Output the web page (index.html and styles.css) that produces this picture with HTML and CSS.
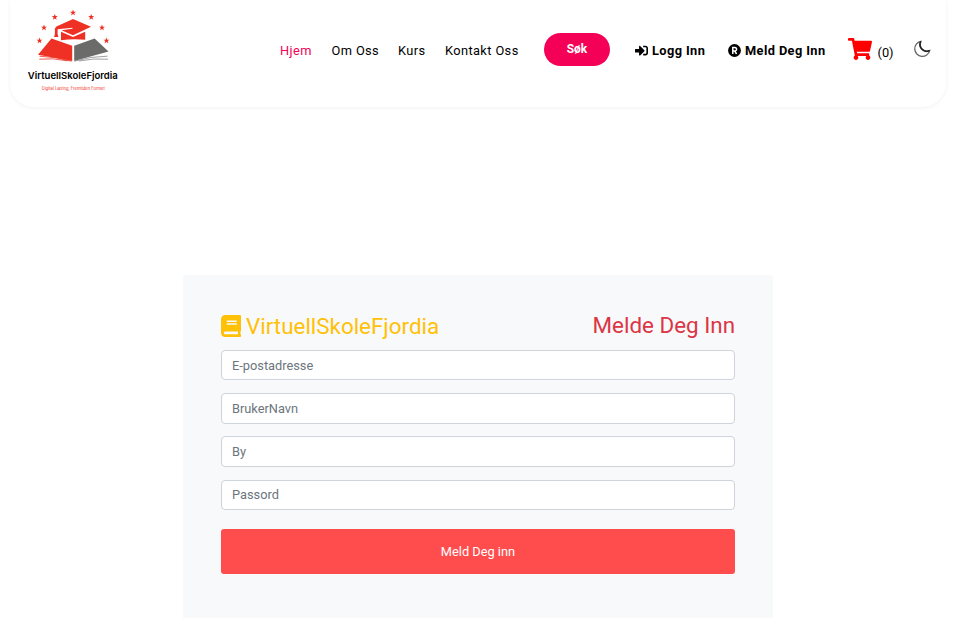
FILE: index.html
```html
<!DOCTYPE html>
<html lang="no">
<head>
<meta charset="utf-8">
<title>VirtuellSkoleFjordia</title>
<link rel="stylesheet" href="styles.css">
</head>
<body>
<header class="navbar">
  <a class="logo" aria-label="VirtuellSkoleFjordia">
    <svg width="110" height="96" viewBox="20 0 110 96">
      <defs><path id="star" d="M0-3.1L.8-.9 3-.9 1.2.5 1.9 2.7 0 1.4-1.9 2.7-1.2.5-3-.9-.8-.9z"/></defs>
      <g fill="#ee3124">
        <use href="#star" x="73" y="12.7"/><use href="#star" x="54.8" y="17"/><use href="#star" x="91.2" y="17"/>
        <use href="#star" x="44" y="27.6"/><use href="#star" x="102" y="27.6"/>
        <use href="#star" x="39.5" y="40.6"/><use href="#star" x="106.5" y="40.6"/>
        <path d="M73 19L91 26.8 73 35.3 61.5 30.2 72.5 28.7v-.9L57.6 29.3v4.6l.8 3h-4.3l.8-3v-5.3l1.5-2z"/>
        <path d="M61 31.7l12 5.4 12.2-5.4v8.1Q73 38.5 61 40.3z"/>
        <path d="M51.5 38.4L72.2 45.8V61L38 54.8z"/>
      </g>
      <path fill="#6b6b69" d="M74.2 45.8l20.4-7.2L108.500 51.600 74.200 61z"/>
      <g fill="none" stroke="#ee3124" stroke-width=".8"><path d="M39.500 56.200q16 .5 32 5M39.300 59.200q14-1.500 28 1.600"/></g>
      <g fill="none" stroke="#888" stroke-width=".8"><path d="M74.500 61.200q16-5 33-5M79 61q14-3 29-1.800"/></g>
      <text class="logo-name" x="27.8" y="79.3" textLength="90" lengthAdjust="spacingAndGlyphs">VirtuellSkoleFjordia</text>
      <text class="logo-tag" x="41.8" y="89.6" textLength="63" lengthAdjust="spacingAndGlyphs">Digital Læring, Fremtiden Formet</text>
    </svg>
  </a>
  <nav class="menu">
    <a class="active">Hjem</a><a>Om Oss</a><a>Kurs</a><a>Kontakt Oss</a>
    <button class="search">Søk</button>
    <a class="auth"><svg width="13" height="13" viewBox="0 0 512 512"><path d="M416 448h-84c-6.600 0-12-5.400-12-12v-40c0-6.600 5.400-12 12-12h84c17.700 0 32-14.300 32-32V160c0-17.700-14.300-32-32-32h-84c-6.600 0-12-5.400-12-12V76c0-6.600 5.400-12 12-12h84c53 0 96 43 96 96v192c0 53-43 96-96 96zm-47-201L201 79c-15-15-41-4.500-41 17v96H24c-13.300 0-24 10.700-24 24v96c0 13.300 10.700 24 24 24h136v96c0 21.500 26 32 41 17l168-168c9.300-9.400 9.300-24.600 0-34z"/></svg><span>Logg Inn</span></a>
    <a class="auth"><svg width="13" height="13" viewBox="0 0 13 13"><circle cx="6.500" cy="6.500" r="6.400"/><path fill="none" stroke="#fff" stroke-width="1.500" d="M4.800 10V3.600h2a1.700 1.700 0 0 1 0 3.500h-2M6.800 7.100L8.600 10"/></svg><span>Meld Deg Inn</span></a>
    <a class="cart"><svg width="24" height="22" viewBox="0 0 576 512" preserveAspectRatio="none"><path d="M528.120 301.319l47.273-208C578.806 78.301 567.391 64 551.990 64H159.208l-9.166-44.810C147.758 8.021 137.930 0 126.529 0H24C10.745 0 0 10.745 0 24v16c0 13.255 10.745 24 24 24h69.883l70.248 343.435C147.325 417.100 136 435.222 136 456c0 30.928 25.072 56 56 56s56-25.072 56-56c0-15.674-6.447-29.835-16.824-40h209.647C430.447 426.165 424 440.326 424 456c0 30.928 25.072 56 56 56s56-25.072 56-56c0-22.172-12.888-41.332-31.579-50.405l5.517-24.276c3.413-15.018-8.002-29.319-23.403-29.319H218.117l-6.545-32h293.145c11.206 0 20.920-7.754 23.403-18.681z"/></svg><span>(0)</span></a>
    <a class="moon" aria-label="Mørk modus"><svg width="18" height="18" viewBox="0 0 18 18"><path d="M7.800 1.300A7.600 7.600 0 1 0 16.700 10.600C11.500 13 4.800 8.200 7.800 1.300z"/><path class="shade" d="M7.800 1.300C4.800 8.200 11.500 13 16.700 10.600"/></svg></a>
  </nav>
</header>
<main class="card">
  <div class="heading">
    <h1 class="brand"><svg width="20" height="22" viewBox="0 0 448 512" preserveAspectRatio="none"><path d="M448 360V24c0-13.300-10.700-24-24-24H96C43 0 0 43 0 96v320c0 53 43 96 96 96h328c13.300 0 24-10.700 24-24v-16c0-7.500-3.500-14.300-8.900-18.700-4.200-15.400-4.200-59.300 0-74.700 5.400-4.300 8.900-11.100 8.900-18.600zM128 134c0-3.300 2.700-6 6-6h212c3.300 0 6 2.700 6 6v20c0 3.300-2.700 6-6 6H134c-3.300 0-6-2.700-6-6v-20zm0 64c0-3.300 2.700-6 6-6h212c3.300 0 6 2.700 6 6v20c0 3.300-2.700 6-6 6H134c-3.300 0-6-2.700-6-6v-20zm253.400 250H96c-17.700 0-32-14.300-32-32 0-17.600 14.400-32 32-32h285.400c-1.900 17.100-1.900 46.900 0 64z"/></svg><span>VirtuellSkoleFjordia</span></h1>
    <h2 class="title">Melde Deg Inn</h2>
  </div>
  <form class="fields">
    <input type="email" placeholder="E-postadresse">
    <input class="tall" type="text" placeholder="BrukerNavn">
    <input class="tall" type="text" placeholder="By">
    <input class="password" type="password" placeholder="Passord">
    <button class="submit" type="button">Meld Deg inn</button>
  </form>
</main>
</body>
</html>
```
FILE: styles.css
```css
* { box-sizing: border-box; }
body {
  margin: 0;
  height: 618px;
  overflow: hidden;
  background: #fff;
  color: #000;
  font: 12.8px/20px Roboto, sans-serif;
}
.navbar {
  display: flex;
  width: 936px;
  height: 107px;
  margin-left: 10px;
  padding-left: 10px;
  border-radius: 0 0 24px 24px;
  box-shadow: 0 1px 4px rgba(0, 0, 0, .06);
}
.logo { width: 260px; }
.logo svg { display: block; }
.logo-name { font: 600 9.5px Inter, sans-serif; }
.logo-tag { font: 4.2px Inter, sans-serif; fill: #ee3124; }
.menu {
  display: grid;
  grid-template-columns: 51.5px 66.5px 47px 99px 91px 93px 119.5px 65.5px 20px;
  height: 102px;
  align-items: center;
  letter-spacing: .4px;
  white-space: nowrap;
}
.active { color: #f50057; }
.search {
  width: 66px;
  height: 33px;
  margin-top: -4px;
  padding: 0;
  border: 0;
  border-radius: 17px;
  background: #f50057;
  color: #fff;
  font: 700 12px Roboto, sans-serif;
}
.auth {
  display: flex;
  align-items: center;
  gap: 4px;
  font-weight: 700;
}
.auth svg { margin-top: -2px; }
.cart {
  display: flex;
  align-items: center;
  gap: 6px;
  letter-spacing: 0;
}
.cart svg { fill: red; margin-top: -4px; }
.cart span { padding-top: 3px; }
.moon svg {
  display: block;
  margin-top: -4px;
  fill: none;
  stroke: #666;
  stroke-width: 1.3;
}
.moon .shade { stroke: #222; stroke-width: 1.6; }
.card {
  width: 590px;
  height: 360px;
  margin: 168px 0 0 183px;
  padding: 36px 38px;
  border-radius: 4px;
  background: #f8f9fb;
}
.heading {
  display: flex;
  justify-content: space-between;
  height: 39px;
}
.brand, .title {
  margin: 0;
  font-size: 22.4px;
  font-weight: 400;
  line-height: 28px;
}
.brand {
  display: flex;
  align-items: center;
  gap: 5px;
  height: 30px;
  color: #ffc107;
}
.brand svg { fill: #ffc107; }
.title { color: #dc3545; }
.fields { display: flex; flex-direction: column; }
.fields input {
  width: 100%;
  height: 30px;
  margin: 0 0 13px;
  padding: 0 10px;
  border: 1px solid #ced4da;
  border-radius: 4px;
  background: #fff;
  font: 12.8px Roboto, sans-serif;
}
.fields .tall { height: 31px; margin-bottom: 12px; }
.fields .tall + .tall { margin-bottom: 13px; }
.fields .password { padding-bottom: 1px; }
.fields input::placeholder { color: #6c757d; opacity: 1; }
.submit {
  height: 45px;
  margin-top: 6px;
  padding: 0;
  border: 0;
  border-radius: 3px;
  background: #ff4d4d;
  color: #fff;
  font: 12.8px Roboto, sans-serif;
}
```
